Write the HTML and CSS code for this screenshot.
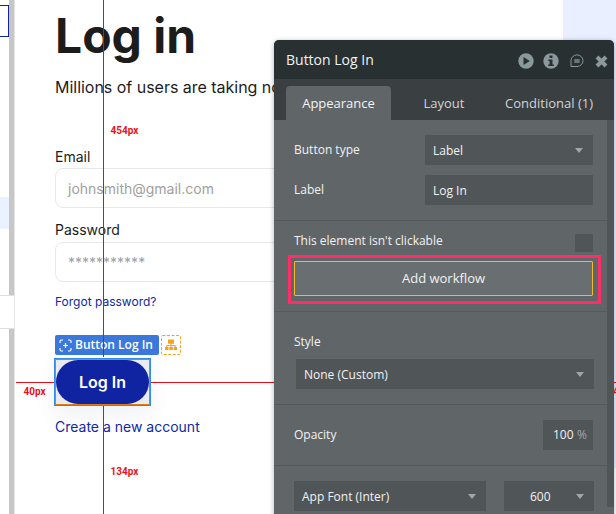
FILE: index.html
```html
<!DOCTYPE html>
<html lang="en">
<head>
<meta charset="utf-8">
<title>Editor</title>
<link rel="stylesheet" href="styles.css">
</head>
<body>
<div class="editor">
  <aside class="rail">
    <div class="rail-selected"></div>
    <div class="rail-highlight"></div>
    <div class="rail-card"></div>
  </aside>
  <main class="canvas">
    <h1>Log in</h1>
    <p class="intro">Millions of users are taking notes</p>
    <label class="email-label">Email</label>
    <div class="input"><span class="email-text">johnsmith@gmail.com</span></div>
    <label class="password-label">Password</label>
    <div class="input"><span class="password-text">***********</span></div>
    <a class="forgot">Forgot password?</a>
    <div class="badges">
      <div class="badge">
        <svg width="13" height="13" viewBox="0 0 13 13" fill="none" stroke="#fff" stroke-width="1.2"><path d="M1 4V2.5Q1 1 2.5 1H4M9 1h1.5Q12 1 12 2.5V4M12 9v1.500Q12 12 10.500 12H9M4 12H2.500Q1 12 1 10.500V9M6.500 4v5M4 6.500h5"/></svg>
        <span>Button Log In</span>
      </div>
      <div class="tree">
        <svg width="20" height="20" viewBox="0 0 20 20"><rect x=".5" y=".5" width="19" height="19" rx="1" fill="none" stroke="#f5a623" stroke-dasharray="3 1.500"/><path fill="#f9a11b" d="M7 4.500h6v4.300H7zM4 12h3.500v3H4zM8.300 12h3.500v3H8.300zM12.600 12h3.500v3h-3.500z"/><path d="M10 8v4M5.700 12v-1.500h8.600V12" fill="none" stroke="#f9a11b"/></svg>
      </div>
    </div>
    <div class="selection"><div class="frame"><div class="login"><span>Log In</span></div></div></div>
    <a class="create">Create a new account</a>
  </main>
  <div class="side"></div>

  <div class="guide guide-top"></div>
  <div class="guide guide-bottom"></div>
  <div class="guide guide-left"></div>
  <div class="guide guide-right"></div>
  <span class="measure m-top">454px</span>
  <span class="measure m-left">40px</span>
  <span class="measure m-bottom">134px</span>
  <span class="measure m-right">4</span>

  <section class="panel">
    <header>
      <span class="heading">Button Log In</span>
      <svg width="16" height="16" viewBox="0 0 16 16"><circle cx="8" cy="8" r="7.700" fill="#8b999c"/><path d="M5.500 4l6.300 4-6.300 4z" fill="#293032"/></svg>
      <svg width="16" height="16" viewBox="0 0 16 16"><circle cx="8" cy="8" r="7.700" fill="#8b999c"/><path d="M6.500 2.500h3v2.600h-3zM5.300 6.500h4.200v5h1.300v1.600H5.200v-1.600h1.300V8.100H5.300z" fill="#293032"/></svg>
      <svg class="comment" width="14" height="14" viewBox="0 0 14 14"><path d="M1 12.500V6.800a6 5.800 0 1 1 6 5.700z" fill="none" stroke="#8b999c"/><path d="M4.200 5h5.500v4H4.200z" fill="#66757a"/></svg>
      <svg class="close" width="13" height="13" viewBox="0 0 13 13"><path d="M2 2l9 9M11 2l-9 9" stroke="#8b999c" stroke-width="4"/></svg>
    </header>
    <nav>
      <span class="tab active">Appearance</span>
      <span class="tab layout">Layout</span>
      <span class="tab conditional">Conditional (1)</span>
    </nav>
    <div class="body">
      <div class="content">
        <div class="group kinds">
          <div class="row"><span class="type-name">Button type</span><div class="field"><span>Label</span><i class="arrow"></i></div></div>
          <div class="row"><span>Label</span><div class="field"><span>Log In</span></div></div>
        </div>
        <div class="group workflow">
          <div class="row click"><span>This element isn't clickable</span><i class="check"></i></div>
          <div class="callout"><div class="add"><span>Add workflow</span></div></div>
        </div>
        <div class="group style">
          <span class="style-name">Style</span>
          <div class="field wide"><span class="custom">None (Custom)</span><i class="arrow"></i></div>
        </div>
        <div class="group opacity">
          <span>Opacity</span><div class="field percent"><span>100</span><span class="unit">%</span></div>
        </div>
        <div class="group fonts">
          <div class="field family"><span>App Font (Inter)</span><i class="arrow"></i></div>
          <div class="field weight"><span>600</span><i class="arrow"></i></div>
        </div>
      </div>
      <div class="scroll"><div class="thumb"></div></div>
    </div>
  </section>
</div>
</body>
</html>
```
FILE: styles.css
```css
* { box-sizing: border-box; }
body { margin: 0; overflow: hidden; font-family: Inter, sans-serif; }
.editor { position: relative; display: flex; width: 616px; height: 514px; overflow: hidden; background: #fff; }
.rail { width: 15px; height: 514px; flex: none; padding-top: 5px; background: linear-gradient(90deg, #fff 9px, #c7c7c7 9px, #c7c7c7 14px, #e4e4e4 14px); }
.rail-selected { width: 9px; height: 32px; border: 1px solid #1226a3; border-left: 0; }
.rail-highlight { width: 9px; height: 32px; margin-top: 160px; background: #eaf1ff; }
.rail-card { width: 14px; height: 34px; margin-top: 66px; border: 1px solid #dedede; border-width: 1px 0; background: #fff; }
.canvas { display: flex; flex-direction: column; align-items: flex-start; width: 548px; padding: 7px 0 0 40px; color: #1c1c1c; white-space: nowrap; }
.side { width: 53px; height: 468px; background: #e9efff; }
h1 { margin: 0; font-size: 48px; line-height: 58px; font-weight: 700; }
.intro { margin: 12px 0 0; font-size: 16px; line-height: 20px; letter-spacing: -.02px; }
label { font-size: 14px; line-height: 20px; }
.email-label { margin-top: 50px; }
.password-label { margin-top: 12px; margin-bottom: 2px; }
.input { width: 360px; height: 40px; margin-top: 0; padding: 0 12px; border: 1px solid #e8e8e8; border-radius: 8px; font-size: 14px; line-height: 40px; color: #a0a0a0; }
.email-label + .input { margin-top: 1px; }
.forgot { margin-top: 10px; font-size: 12px; line-height: 20px; color: #1029a5; }
.badges { display: flex; gap: 2px; margin-top: 23px; height: 20px; }
.badge { display: flex; align-items: center; gap: 3px; width: 104px; height: 20px; padding-left: 4px; border-radius: 2px; background: #3b78db; color: #fff; font: 600 12px/20px "Open Sans"; }
.tree { height: 20px; }
.selection { width: 97px; height: 48px; margin: 3px 0 0 -1px; border: 1px solid #318be7; background: #e9ebef; box-shadow: 0 10px 22px rgba(20, 40, 120, .06); }
.frame { height: 46px; border: 1px solid #de7b19; }
.login { height: 44px; border-radius: 22px; background: #1024a2; color: #fff; text-align: center; font-size: 16px; line-height: 45px; font-weight: 600; }
.create { margin-top: 11px; font-size: 14px; line-height: 20px; color: #1029a5; }
.guide { position: absolute; background: #e50b18; }
.guide-top { left: 103px; top: 0; width: 1px; height: 357px; }
.guide-bottom { left: 103px; top: 406px; width: 1px; height: 108px; }
.guide-left { left: 16px; top: 382px; width: 38px; height: 1px; }
.guide-right { left: 151px; top: 382px; width: 465px; height: 1px; }
.measure { position: absolute; color: #ed1020; font: 700 10px/14px Roboto; }
.m-top { left: 110.5px; top: 124px; }
.m-left { left: 23.500px; top: 385px; }
.m-bottom { left: 110.5px; top: 465px; }
.m-right { left: 613px; top: 385px; }
.panel { position: absolute; left: 274px; top: 40px; width: 340px; height: 480px; border-radius: 5px 5px 0 0; overflow: hidden; background: #606568; color: #f2f2f2; font: 12px/18px "Open Sans", sans-serif; white-space: nowrap; box-shadow: 0 1px 5px rgba(20, 30, 50, .35); }
header { display: flex; align-items: center; gap: 9px; height: 39px; padding: 1px 6px 0 12px; background: #293032; }
.heading { margin-right: auto; font-size: 14px; }
header svg { flex: none; margin-top: 1px; }
header .comment { margin-left: 2px; }
header .close { margin: 2px 0 0 2px; }
nav { display: flex; height: 41px; padding: 7px 0 0 12px; background: #3a3f42; font-size: 13px; line-height: 35px; color: #d2d4d5; }
.active { width: 105px; height: 34px; border-radius: 4px 4px 0 0; text-align: center; background: #606568; color: #f4f4f4; }
.layout { margin-left: 32.5px; }
.conditional { margin-left: auto; margin-right: 21px; }
.body { display: flex; height: 400px; }
.content { width: 333px; }
.scroll { width: 7px; }
.thumb { height: 387px; background: #505558; }
.group { border-bottom: 1px solid #55595c; }
.kinds { display: flex; flex-direction: column; gap: 10px; height: 101px; padding: 15px 14px 0 20px; }
.row { display: flex; justify-content: space-between; align-items: center; }
.field { display: flex; align-items: center; justify-content: space-between; width: 168px; height: 30px; padding: 1px 10px 0 8px; background: #505558; }
.arrow { width: 0; height: 0; border: 4px solid transparent; border-top: 5px solid #a1a6a8; border-bottom: 0; }
.workflow { height: 91px; padding: 10px 0 0 14px; }
.click { height: 20px; padding: 0 14px 0 6px; }
.check { width: 18px; height: 18px; margin-top: 4px; background: #505558; }
.callout { width: 313px; height: 49px; margin-top: 4px; padding: 3px 5px 3px 3px; border: 3px solid #ff2e69; }
.add { height: 35px; border: 1px solid #f5b828; border-radius: 1px; background: #696e71; text-align: center; font-size: 13px; line-height: 33px; }
.style { height: 93px; padding: 21px 13px 0 20px; }
.style-name { display: block; }
.wide { width: 298px; margin: 8px 0 0 2px; }
.opacity { display: flex; align-items: center; justify-content: space-between; height: 61px; padding: 0 14px 0 20px; }
.percent { width: 50px; padding: 0 6px 0 10px; }
.unit { color: #a3a7a9; }
.fonts { display: flex; gap: 18px; padding: 15px 0 0 20px; border: 0; }
.family { width: 192px; }
.weight { width: 90px; padding-left: 26px; }
```
